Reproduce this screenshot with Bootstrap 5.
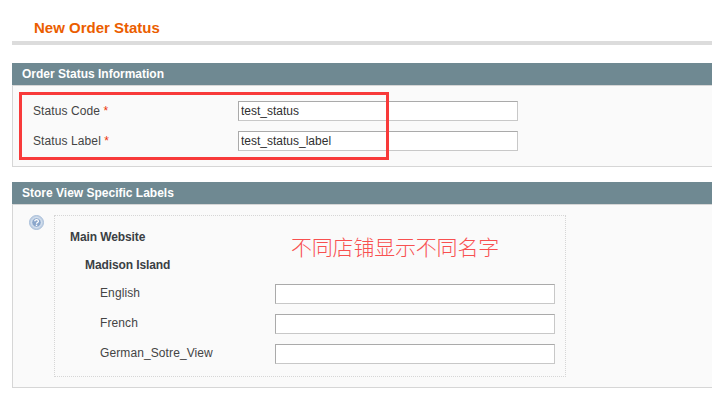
<!DOCTYPE html>
<html lang="en">
<head>
  <meta charset="UTF-8">
  <title>New Order Status</title>
  <meta name="viewport" content="width=device-width, initial-scale=1">
  <link href="https://cdn.jsdelivr.net/npm/bootstrap@5.3.3/dist/css/bootstrap.min.css" rel="stylesheet">
  <style>
    body {
      background: #fff;
      font-family: "Liberation Sans", Arial, sans-serif;
      font-size: 12px;
      line-height: 15px;
      color: #444;
      overflow: hidden;
    }
    .page-wrap {
      position: relative;
      height: 415px;
      padding: 0 0 0 12px;
    }
    .title-bar {
      height: 45px;
      padding: 20px 0 0 22px;
      margin-bottom: 18px;
      border-bottom: 4px solid #dcdcdc;
    }
    .title-bar h3 {
      margin: 0;
      font-size: 15px;
      line-height: 16px;
      font-weight: bold;
      color: #eb5e00;
    }
    .head-bar {
      height: 22px;
      padding: 3px 0 0 10px;
      background: #6f8992;
      color: #fff;
      font-weight: bold;
      line-height: 16px;
    }
    .box-body {
      background: #fafafa;
      border: 1px solid #d6d6d6;
    }
    .box-status {
      height: 82px;
      padding: 15px 0 0 20px;
      margin-bottom: 15px;
    }
    .box-labels {
      height: 184px;
      padding: 10px 0 0 16px;
    }
    .form-line {
      height: 20px;
      margin-bottom: 10px;
    }
    .form-line label {
      width: 205px;
      margin: 0;
      line-height: 18px;
      letter-spacing: .1px;
    }
    .req { color: #eb340a; }
    .txt-input {
      width: 280px;
      height: 20px;
      padding: 0 2px;
      background: #fff;
      border: 1px solid;
      border-color: #aaa #c8c8c8 #c8c8c8 #aaa;
      border-radius: 0;
      outline: 0;
      font: 12px/18px "Liberation Sans", Arial, sans-serif;
      color: #2f2f2f;
    }
    .help-icon {
      width: 15px;
      height: 15px;
      flex: none;
      margin: 0 10px 0 0;
    }
    .scope-box {
      width: 512px;
      height: 162px;
      padding: 13px 10px 0 15px;
      border: 1px dotted #d6d6d6;
    }
    .scope-box h4 {
      margin: 0;
      font-size: 12px;
      line-height: 16px;
      font-weight: bold;
      letter-spacing: -.1px;
      color: #3a3f44;
    }
    .scope-box h4.sub-name {
      margin: 12px 0 11px 15px;
    }
    .lang-line {
      height: 20px;
      margin: 0 0 10px 30px;
    }
    .lang-line label {
      width: 175px;
      margin: 0;
      line-height: 18px;
      letter-spacing: .1px;
    }
    /* red marks drawn on top of the screenshot */
    .mark-rect {
      position: absolute;
      left: 19px;
      top: 92px;
      width: 370px;
      height: 68px;
      border: 3px solid #f83a3a;
    }
    .mark-note {
      position: absolute;
      left: 291px;
      top: 233px;
      font-family: "Noto Sans CJK SC", sans-serif;
      font-size: 21px;
      line-height: 27px;
      letter-spacing: -.2px;
      font-weight: 300;
      color: #f85050;
      white-space: nowrap;
    }
  </style>
</head>
<body class="m-0">
  <div class="page-wrap">

    <div class="title-bar">
      <h3>New Order Status</h3>
    </div>

    <div class="head-bar">Order Status Information</div>
    <div class="box-body box-status border-end-0">
      <div class="form-line d-flex align-items-center">
        <label>Status Code <span class="req">*</span></label>
        <input class="txt-input" type="text" value="test_status">
      </div>
      <div class="form-line d-flex align-items-center">
        <label>Status Label <span class="req">*</span></label>
        <input class="txt-input" type="text" value="test_status_label">
      </div>
    </div>

    <div class="head-bar">Store View Specific Labels</div>
    <div class="box-body box-labels border-end-0 d-flex align-items-start">
      <svg class="help-icon" viewBox="0 0 15 15" aria-hidden="true">
        <circle cx="7.5" cy="7.5" r="7" fill="#c3d3e6" stroke="#a9bed9"/>
        <circle cx="7.5" cy="7.5" r="4.8" fill="#8aa6cb" stroke="#e4ecf5"/>
        <path d="M5.8 6.2c0-2.2 3.6-2.2 3.6 0 0 1.4-1.9 1.3-1.9 2.6" fill="none" stroke="#fff" stroke-width="1.3"/>
        <rect x="6.8" y="9.6" width="1.4" height="1.4" fill="#fff"/>
      </svg>
      <div class="scope-box">
        <h4>Main Website</h4>
        <h4 class="sub-name">Madison Island</h4>
        <div class="lang-line d-flex align-items-start">
          <label>English</label>
          <input class="txt-input" type="text">
        </div>
        <div class="lang-line d-flex align-items-start">
          <label>French</label>
          <input class="txt-input" type="text">
        </div>
        <div class="lang-line d-flex align-items-start">
          <label>German_Sotre_View</label>
          <input class="txt-input" type="text">
        </div>
      </div>
    </div>

    <div class="mark-rect"></div>
    <div class="mark-note" lang="zh-CN">不同店铺显示不同名字</div>
  </div>

  <script src="https://cdn.jsdelivr.net/npm/bootstrap@5.3.3/dist/js/bootstrap.bundle.min.js"></script>
</body>
</html>
